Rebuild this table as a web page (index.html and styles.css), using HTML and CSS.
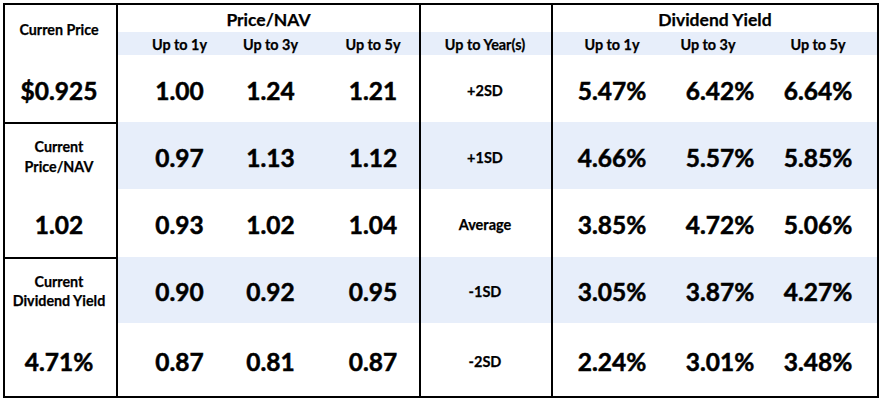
FILE: index.html
```html
<!DOCTYPE html>
<html lang="en">
<head>
<meta charset="utf-8">
<title>Price/NAV and Dividend Yield</title>
<link rel="stylesheet" href="styles.css">
</head>
<body>
<div class="sheet">
  <div class="cell side label first">Curren Price</div>
  <div class="cell title g-span edge">Price/NAV</div>
  <div class="cell mid edge"></div>
  <div class="cell title d-span">Dividend Yield</div>

  <div class="cell sub band g1">Up to 1y</div>
  <div class="cell sub band g2">Up to 3y</div>
  <div class="cell sub band g3 edge">Up to 5y</div>
  <div class="cell sub band mid edge">Up to Year(s)</div>
  <div class="cell sub band d1">Up to 1y</div>
  <div class="cell sub band d2h">Up to 3y</div>
  <div class="cell sub band d3">Up to 5y</div>

  <div class="cell side big">$0.925</div>
  <div class="cell big g1">1.00</div>
  <div class="cell big g2">1.24</div>
  <div class="cell big g3 edge">1.21</div>
  <div class="cell sd mid edge">+2SD</div>
  <div class="cell big d1">5.47%</div>
  <div class="cell big d2">6.42%</div>
  <div class="cell big d3">6.64%</div>

  <div class="cell side label split">Current<br>Price/NAV</div>
  <div class="cell big band g1">0.97</div>
  <div class="cell big band g2">1.13</div>
  <div class="cell big band g3 edge">1.12</div>
  <div class="cell sd band mid edge">+1SD</div>
  <div class="cell big band d1">4.66%</div>
  <div class="cell big band d2">5.57%</div>
  <div class="cell big band d3">5.85%</div>

  <div class="cell side big">1.02</div>
  <div class="cell big g1">0.93</div>
  <div class="cell big g2">1.02</div>
  <div class="cell big g3 edge">1.04</div>
  <div class="cell sd mid edge">Average</div>
  <div class="cell big d1">3.85%</div>
  <div class="cell big d2">4.72%</div>
  <div class="cell big d3">5.06%</div>

  <div class="cell side label split">Current<br>Dividend Yield</div>
  <div class="cell big band g1">0.90</div>
  <div class="cell big band g2">0.92</div>
  <div class="cell big band g3 edge">0.95</div>
  <div class="cell sd band mid edge">-1SD</div>
  <div class="cell big band d1">3.05%</div>
  <div class="cell big band d2">3.87%</div>
  <div class="cell big band d3">4.27%</div>

  <div class="cell side big">4.71%</div>
  <div class="cell big g1">0.87</div>
  <div class="cell big g2">0.81</div>
  <div class="cell big g3 edge">0.87</div>
  <div class="cell sd mid edge">-2SD</div>
  <div class="cell big d1">2.24%</div>
  <div class="cell big d2">3.01%</div>
  <div class="cell big d3">3.48%</div>
</div>
</body>
</html>
```
FILE: styles.css
```css
html, body {
  margin: 0;
  padding: 0;
  background: #ffffff;
}

body {
  padding: 3px 0 0 3px;
  font-family: Lato, "Open Sans", sans-serif;
  font-weight: 700;
  color: #000;
}

.sheet {
  width: 876px;
  box-sizing: border-box;
  border: 2px solid #000;
  display: grid;
  grid-template-columns: 113px 100px 100px 103px 132px 108px 108px 108px;
  grid-template-rows: 27px 23px 67px 67px 68px 66px 73px;
}

.cell {
  box-sizing: border-box;
  display: flex;
  align-items: center;
  justify-content: center;
  text-align: center;
  white-space: nowrap;
  -webkit-text-stroke: 0.25px #000;
}

.side {
  grid-column: 1;
  border-right: 2px solid #000;
  background: #fff;
}

.first {
  grid-row: 1 / span 2;
}

.split {
  border-top: 2px solid #000;
}

.label {
  font-size: 14.3px;
  line-height: 19.5px;
  padding-right: 3px;
}

.title {
  font-size: 17.5px;
  padding-top: 1px;
}

.g-span {
  grid-column: span 3;
}

.d-span {
  grid-column: span 3;
}

.edge {
  border-right: 2px solid #000;
}

.band {
  background: #e7eefa;
}

.sub {
  font-size: 14.4px;
  padding-top: 2px;
}

.big {
  font-size: 24.5px;
  padding-top: 3px;
  -webkit-text-stroke: 0.5px #000;
}

.sd {
  font-size: 14.5px;
  padding-top: 3px;
}

.g1 { padding-left: 23px; }
.g2 { padding-left: 5px; }
.g3 { padding-left: 9px; }
.mid { padding-right: 2px; }
.d1 { padding-left: 10px; }
.d2 { padding-left: 10px; }
.d2h { padding-right: 14px; }
.d3 { padding-right: 10px; }

.side.big {
  padding-right: 3px;
}
```
